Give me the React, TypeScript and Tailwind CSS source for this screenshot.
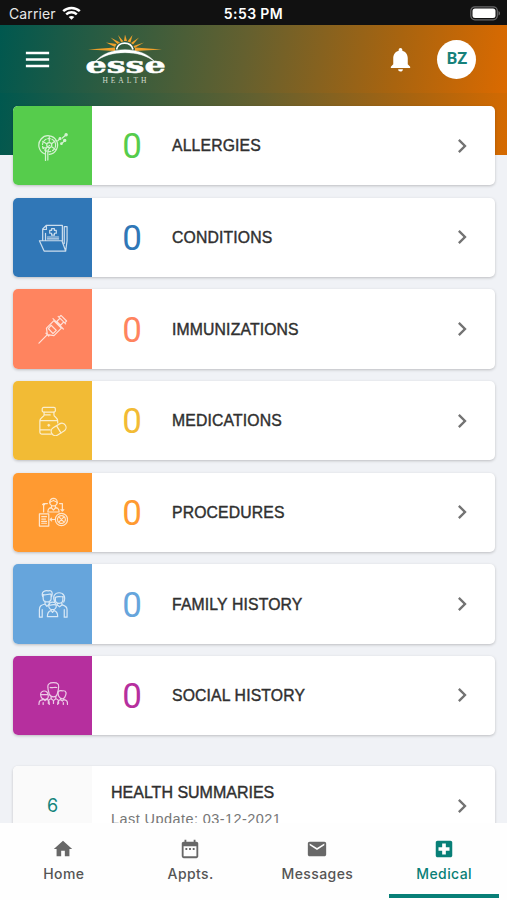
import type { ReactNode } from "react";
import {
  MdChevronRight,
  MdDateRange,
  MdHome,
  MdLocalHospital,
  MdMail,
  MdMenu,
  MdNotifications,
} from "react-icons/md";

function LineIcon({ children }: { children: ReactNode }) {
  return (
    <svg
      width="30"
      height="30"
      viewBox="0 0 32 32"
      fill="none"
      stroke="white"
      strokeWidth="1.3"
      strokeLinecap="round"
      strokeLinejoin="round"
      opacity="0.75"
    >
      {children}
    </svg>
  );
}

function AllergiesIcon() {
  return (
    <LineIcon>
      <path d="M7.6 24.500A10 10 0 1 1 12 25" />
      <circle cx="11.800" cy="15" r="7" strokeDasharray="2.5 2" />
      <circle cx="12" cy="15" r="2.700" />
      <path d="M12.500 15.500c-3 1-4.500 3-4.500 6v10M10.500 31V22c0-2 1-3 2-4M12 6v5M5 11l4 2.500M18.500 10.500l-4 3M18.500 19.500l-3.500-2.500M5 18h4" />
      <path d="M21 10.500l2-2M26 7.500l4-3.500M25.500 13l3-2.500" />
      <g fill="white">
        <circle cx="23.500" cy="8" r="1" />
        <circle cx="30" cy="4" r="1.200" />
        <circle cx="28.500" cy="10" r="1.200" />
        <circle cx="25" cy="13.500" r="0.800" />
      </g>
    </LineIcon>
  );
}

function ConditionsIcon() {
  return (
    <LineIcon>
      <path d="M1.500 20h24l4 11H6.500zM29.500 31l1.500-11V5h-3M5 19.500V7.500l4-4h17V20M5 8h4V4M28 5v18M8 12v7" />
      <path d="M14.500 7h3v2h2v3h-2v2h-3v-2h-2V9h2zM10 16h12M10 18h12" />
    </LineIcon>
  );
}

function ImmunizationsIcon() {
  return (
    <LineIcon>
      <path d="M1 31l9-9M8.500 20.500l3 3M10 22l-1-7 8-8 8 8-8 8z" />
      <path d="M14 12l5.500 5.500-3.500 3.500-5-5.500zM16 5l11 11M20 8l3-3M24 12l3-3M21.500 2.500l8 8M22.500 3.500l2-2 6 6-2 2M20 8l4 4M18 8l6 6" />
    </LineIcon>
  );
}

function MedicationsIcon() {
  return (
    <LineIcon>
      <rect x="4.500" y="1.500" width="14" height="5" rx="1.500" />
      <path d="M6.500 6.500v3c0 2-4.500 3-4.500 6.500V28c0 1.500.8 2 2 2h10M17 6.500v3c0 2 4 3 4 6.500v2M7 9.500h6M2 15.500h19M2 25.500h11M10.500 20.500h2M11.500 19.500v2" />
      <rect x="13.500" y="20.500" width="17" height="9" rx="4.500" transform="rotate(-32 22 25)" />
      <path d="M20 21.500l4.500 7.200" />
    </LineIcon>
  );
}

function ProceduresIcon() {
  return (
    <LineIcon>
      <circle cx="16.500" cy="5.500" r="4" />
      <path d="M12.500 6c1-2 3-1 4-2.500 1 1.500 3 .5 4 2.500M14.500 9v2c-3 .5-4 1.500-4 5h12c0-3.500-1-4.500-4-5V9M14 11l2.500 3 2.500-3M6 16V7h4M5 8l1-1 1 1M23 7h3v8M24.500 13.500l1.500 1.500 1.500-1.500M13 24h5M14.500 22.500L13 24l1.500 1.500" />
      <path d="M1.500 18h10v13h-10zM4 21h5M4 23.500h4M4 26h5M4 28h5" />
      <circle cx="25" cy="24" r="6.500" />
      <circle cx="25" cy="24" r="4.200" strokeDasharray="1.500 1" />
      <path d="M22.500 21.500l5 5M27.500 21.500l-5 5" />
    </LineIcon>
  );
}

function FamilyIcon() {
  return (
    <LineIcon>
      <path d="M5 8c-2-5 3-7 6-6 4-1 5 2 3.500 6M5.500 7v3c0 5 8.500 5 8.500 0V6M5.500 6c3 1 5-1 8-.5M7.500 13v3c-4 1-6 2-6 6v8h3v-8M12 13v3l-2.500 2.500L7.500 16" />
      <path d="M18 14c-3-6 0-10 4.500-10s7.500 4 5 10M18.500 9v2.500c0 5 8 5 8 0V8c-3 1-5-1-8 1M20.500 15v2l2.500 2 2.500-2v-2M26 17c3.500 1 5 2 5 5v8h-3v-8" />
      <circle cx="15.500" cy="18" r="4" />
      <path d="M12 17c2 .5 4-1 7 0M14 22v1c-3 .5-4 2-4 6.500h11c0-4.500-1-6-4-6.500v-1M14 23l1.500 2 1.500-2" />
    </LineIcon>
  );
}

function SocialIcon() {
  return (
    <LineIcon>
      <path d="M12 15c-2-6-2-10.500 0-11 1-1.500 8-1.500 9 0 1.500 1 1 6-.5 11-1 4-7 4-8.500 0zM13 8c3 1 4-1 7 0M14 17.500V20c-3 .5-3 2-3 5M19 17.500V20c3 .5 3 2 3 5M14 20l2.500 2 2.500-2M16.500 22v3" />
      <path d="M3 17c-2-6 8-8 8 0 0 5-7 5-8 0M3 15.500h7.500M5.500 20v1c-3 .5-4.500 1-4.500 5M9.500 20l-2 2-2-2M9.500 21c2 .5 2.500 1 2.500 5" />
      <path d="M22 17c-1.500-5 0-6 4-5.500 5-.5 4.500 3.500 2.500 7-1.500 3-5.500 1-6.500-1.500M24 20v1c-2 .5-3 1-3 5M27.500 20v1c3 .5 4 1 4 5M24 21l2 1.500 1.500-1.500M5.500 24v2M27 24v2" />
    </LineIcon>
  );
}

const sections = [
  { label: "ALLERGIES", bg: "bg-[#56cc4c]", color: "text-[#56cc4c]", Icon: AllergiesIcon },
  { label: "CONDITIONS", bg: "bg-[#3077b7]", color: "text-[#3077b7]", Icon: ConditionsIcon },
  { label: "IMMUNIZATIONS", bg: "bg-[#ff845f]", color: "text-[#ff845f]", Icon: ImmunizationsIcon },
  { label: "MEDICATIONS", bg: "bg-[#f2bb35]", color: "text-[#f2bb35]", Icon: MedicationsIcon },
  { label: "PROCEDURES", bg: "bg-[#ff9a31]", color: "text-[#ff9a31]", Icon: ProceduresIcon },
  { label: "FAMILY HISTORY", bg: "bg-[#66a5dc]", color: "text-[#66a5dc]", Icon: FamilyIcon },
  { label: "SOCIAL HISTORY", bg: "bg-[#b62f9e]", color: "text-[#b62f9e]", Icon: SocialIcon },
];

const tabs = [
  { label: "Home", Icon: MdHome, active: false },
  { label: "Appts.", Icon: MdDateRange, active: false },
  { label: "Messages", Icon: MdMail, active: false },
  { label: "Medical", Icon: MdLocalHospital, active: true },
];

function StatusBar() {
  return (
    <div className="grid h-[25px] shrink-0 grid-cols-3 items-center bg-[#111111] pt-[3px] text-[14px] leading-none text-white">
      <div className="flex items-center gap-[6px] pl-[9px] text-[#e8e8e8]">
        <span className="tracking-[0.1px]">Carrier</span>
        <svg width="19" height="15" viewBox="0 0 19 15" fill="none" stroke="white" strokeWidth="2.500" className="-mt-[2px]">
          <path d="M1.200 5.200c4.700-4.400 11.900-4.400 16.600 0M4.200 8.400c3-2.800 7.600-2.800 10.600 0" />
          <path d="M9.500 13.800L6.700 11c1.600-1.400 4-1.400 5.600 0z" fill="white" stroke="none" />
        </svg>
      </div>
      <span className="text-center text-[14px] font-semibold tracking-[0.4px]">5:53 PM</span>
      <div className="-mt-[2px] flex justify-end pr-[6px]">
        <svg width="31" height="15" viewBox="0 0 31 15">
          <rect x="0.800" y="0.800" width="26.500" height="13" rx="4" fill="none" stroke="#68686a" strokeWidth="1.200" />
          <rect x="2.500" y="2.500" width="23" height="9.600" rx="2.500" fill="white" />
          <path d="M28.500 5v4.600c2-.8 2-3.800 0-4.600z" fill="#68686a" />
        </svg>
      </div>
    </div>
  );
}

function Logo() {
  return (
    <svg width="84" height="54" viewBox="0 0 84 54" className="mt-[6px]">
      <g fill="#efa02b">
        <path d="M3 14.500L30 12.500v3.500zM77 14.500L50 12.500v3.500z" />
        <path d="M30 12l-9-4.500 10.500 1.500zM32.500 9l-7-6.500 9.500 5zM36 7l-3-7 5.500 6.500zM39 6l1-6.500 2 6.500zM42.500 6.500l5-6.500-2 7.500zM46 8l8-5.500-6 7zM48.500 11l10.500-3.500-9.500 5.500z" />
      </g>
      <path d="M31.500 14.500c1.500-8.500 14.500-8.500 16.500 0" fill="none" stroke="white" strokeWidth="1.600" />
      <path d="M10 27C23 10.500 57 10.500 70 27 56 14.500 24 14.500 10 27z" fill="white" stroke="white" strokeWidth="0.400" />
      <text
        x="0.300"
        y="38"
        textLength="53.500"
        lengthAdjust="spacingAndGlyphs"
        transform="scale(1.500 1)"
        fill="white"
        stroke="white"
        strokeWidth="0.500"
        fontSize="22"
        fontWeight="700"
        fontFamily="DejaVu Serif, serif"
      >
        esse
      </text>
      <text x="17.500" y="47.500" textLength="44" fill="#d5ddce" fontSize="7.500" fontFamily="Liberation Serif, serif">
        HEALTH
      </text>
    </svg>
  );
}

export default function App() {
  return (
    <div className="flex h-[900px] w-[507px] flex-col overflow-hidden bg-[#f0f2f6] font-['Inter',sans-serif]">
      <StatusBar />

      <header className="flex h-[68px] shrink-0 items-center bg-[linear-gradient(99deg,#00584f_0%,#64602f_48%,#a9640f_78%,#db6a00_100%)] pl-[22px] pr-[31px]">
        <MdMenu size={31} className="text-white" />
        <div className="ml-[32px]">
          <Logo />
        </div>
        <MdNotifications size={29} className="ml-auto mr-[22px] text-white" />
        <div className="flex h-[39px] w-[39px] items-center justify-center rounded-full bg-white pl-px pt-px font-['Roboto',sans-serif] text-[16.500px] font-bold text-[#16817a]">
          BZ
        </div>
      </header>

      <main className="flex min-h-0 flex-1 flex-col overflow-hidden bg-[linear-gradient(99deg,#00584f_0%,#64602f_50%,#a9640f_80%,#d66a00_100%)] bg-[length:100%_62px] bg-no-repeat pl-[13px] pr-[12px] pt-[13px]">
        <div className="flex flex-col gap-[12.350px]">
          {sections.map(({ label, bg, color, Icon }) => (
            <button
              key={label}
              className="flex h-[79.300px] w-full shrink-0 items-center overflow-hidden rounded-[5px] bg-white text-left shadow-[0_1px_3px_rgba(0,0,0,0.22)]"
            >
              <span className={`flex h-full w-[79px] items-center justify-center ${bg}`}>
                <Icon />
              </span>
              <span className={`w-[80px] pt-[4px] text-center font-['Roboto',sans-serif] text-[35px] ${color}`}>0</span>
              <span className="pt-px font-['Liberation_Sans',sans-serif] text-[15.750px] tracking-[0.150px] text-[#303030] [-webkit-text-stroke:0.400px_#303030]">
                {label}
              </span>
              <MdChevronRight size={28} className="ml-auto mr-[19px] text-[#737373]" />
            </button>
          ))}
        </div>

        <button className="mt-[31px] flex h-[79px] w-full shrink-0 items-center overflow-hidden rounded-[5px] bg-white text-left shadow-[0_1px_3px_rgba(0,0,0,0.2)]">
          <span className="flex h-full w-[79px] items-center justify-center bg-[#fafafa] text-[18px] text-[#14857c]">
            6
          </span>
          <span className="ml-[19px] flex flex-col font-['Liberation_Sans',sans-serif]">
            <span className="text-[16px] leading-[26px] text-[#303030] [-webkit-text-stroke:0.400px_#303030]">
              HEALTH SUMMARIES
            </span>
            <span className="text-[14.500px] leading-[26px] tracking-[0.430px] text-[#777777]">
              Last Update: 03-12-2021
            </span>
          </span>
          <MdChevronRight size={28} className="ml-auto mr-[19px] text-[#737373]" />
        </button>
      </main>

      <nav className="grid h-[77px] shrink-0 grid-cols-4 bg-[#fefefe]">
        {tabs.map(({ label, Icon, active }) => (
          <button
            key={label}
            className={`flex flex-col items-center pt-[15px] ${active ? "text-[#087f77]" : "text-[#686868]"}`}
          >
            <Icon size={22} />
            <span
              className={`mt-[4px] pl-px text-[14px] font-medium leading-5 tracking-[0.400px] ${active ? "" : "text-[#555555]"}`}
            >
              {label}
            </span>
            {active && <span className="mt-[10px] h-[4px] w-[110px] bg-[#087f77]" />}
          </button>
        ))}
      </nav>
    </div>
  );
}
